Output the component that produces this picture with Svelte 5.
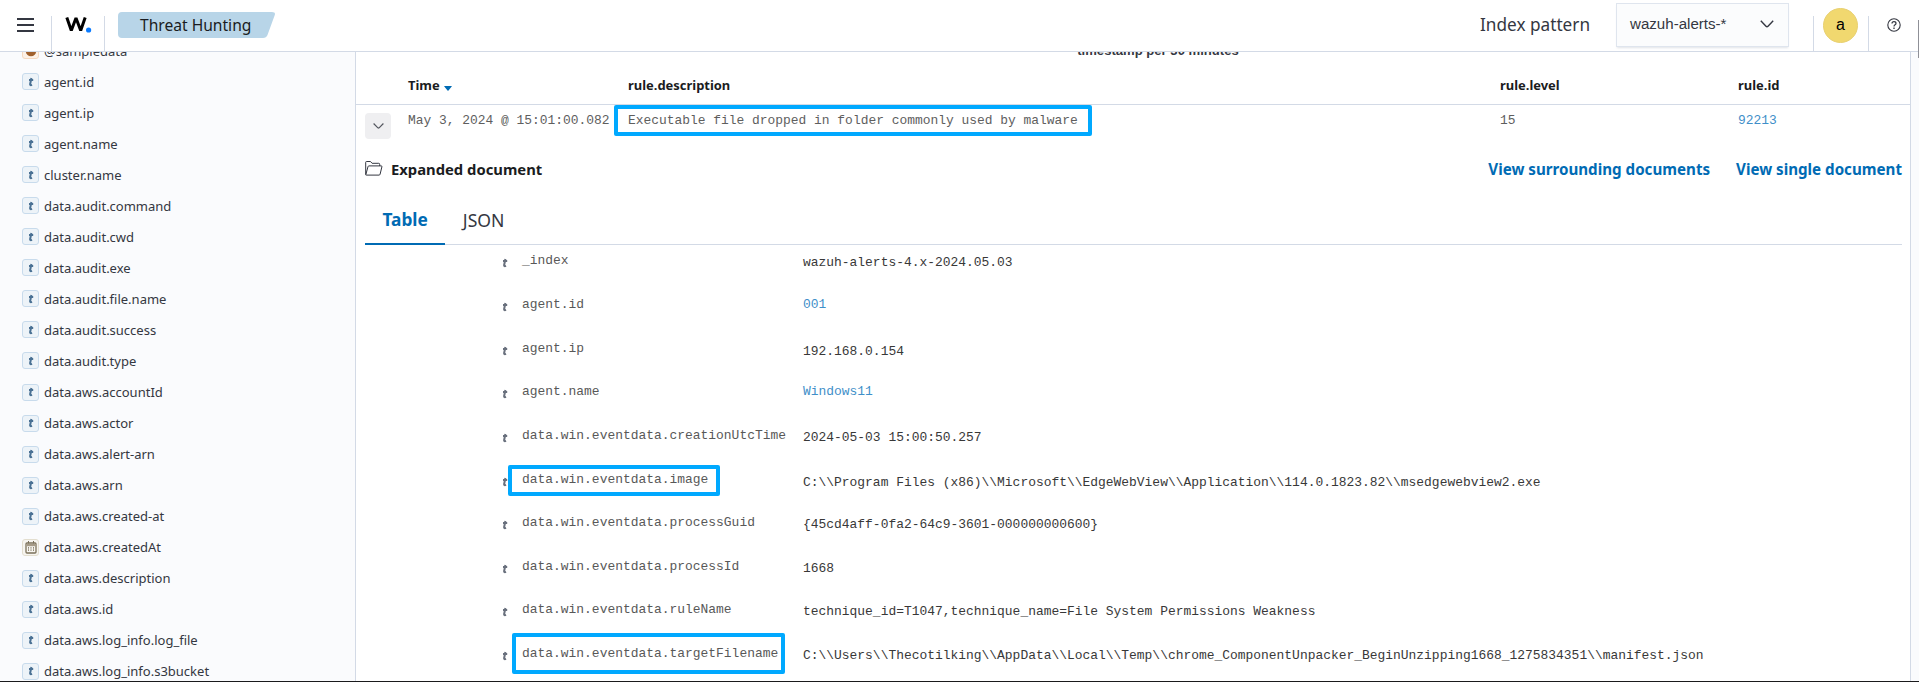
<script>
  const fields = [
    'agent.id', 'agent.ip', 'agent.name', 'cluster.name', 'data.audit.command',
    'data.audit.cwd', 'data.audit.exe', 'data.audit.file.name', 'data.audit.success',
    'data.audit.type', 'data.aws.accountId', 'data.aws.actor', 'data.aws.alert-arn',
    'data.aws.arn', 'data.aws.created-at', 'data.aws.createdAt', 'data.aws.description',
    'data.aws.id', 'data.aws.log_info.log_file', 'data.aws.log_info.s3bucket'
  ];
  const rows = [
    { k: '_index', v: 'wazuh-alerts-4.x-2024.05.03', drop: 2 },
    { k: 'agent.id', v: '001', link: true, drop: 0 },
    { k: 'agent.ip', v: '192.168.0.154', drop: 3 },
    { k: 'agent.name', v: 'Windows11', link: true, drop: 0 },
    { k: 'data.win.eventdata.creationUtcTime', v: '2024-05-03 15:00:50.257', drop: 2 },
    { k: 'data.win.eventdata.image', v: 'C:\\\\Program Files (x86)\\\\Microsoft\\\\EdgeWebView\\\\Application\\\\114.0.1823.82\\\\msedgewebview2.exe', drop: 3, mark: 'image' },
    { k: 'data.win.eventdata.processGuid', v: '{45cd4aff-0fa2-64c9-3601-000000000600}', drop: 2 },
    { k: 'data.win.eventdata.processId', v: '1668', drop: 2 },
    { k: 'data.win.eventdata.ruleName', v: 'technique_id=T1047,technique_name=File System Permissions Weakness', drop: 2 },
    { k: 'data.win.eventdata.targetFilename', v: 'C:\\\\Users\\\\Thecotilking\\\\AppData\\\\Local\\\\Temp\\\\chrome_ComponentUnpacker_BeginUnzipping1668_1275834351\\\\manifest.json', drop: 2, mark: 'target' }
  ];
</script>

<div class="app">
  <header>
    <button class="menu" aria-label="Menu">
      <svg width="17" height="14" viewBox="0 0 17 14"><path d="M0 1h17M0 7h17M0 13h17" stroke="#343741" stroke-width="2" /></svg>
    </button>
    <i class="sep s1"></i>
    <svg class="logo" width="28" height="18" viewBox="0 0 28 18">
      <path d="M1.8 1.5 6.3 14.5 11 2 15.7 14.5 20.2 1.5" fill="none" stroke="#000" stroke-width="3" stroke-linejoin="bevel" />
      <circle cx="23.6" cy="14" r="2.6" fill="#0b7bff" />
    </svg>
    <i class="sep s2"></i>
    <div class="crumb">
      <svg width="158" height="26" viewBox="0 0 158 26"><path d="M4 0h150q4 0 2.6 3.6L149.5 23q-1.2 3-4.5 3H4q-4 0-4-4V4q0-4 4-4z" fill="#b8d5e8" /></svg>
      <span>Threat Hunting</span>
    </div>
    <span class="pattern">Index pattern</span>
    <div class="select">
      <span>wazuh-alerts-*</span>
      <svg width="14" height="8" viewBox="0 0 14 8"><path d="M.8.8 6 6.2Q7 7.2 8 6.2L13.2.8" fill="none" stroke="#343741" stroke-width="1.4" /></svg>
    </div>
    <i class="sep s3"></i>
    <span class="avatar">a</span>
    <i class="sep s4"></i>
    <svg class="help" width="14" height="14" viewBox="0 0 14 14" fill="none" stroke="#343741">
      <circle cx="7" cy="7" r="6.2" stroke-width="1.1" />
      <path d="M5 5.6Q5 3.7 7 3.7T9 5.5C9 6.8 7 6.8 7 8.4" stroke-width="1.2" /><path d="M7 9.6v1.3" stroke-width="1.3" />
    </svg>
    <i class="thumb"></i>
  </header>
  <div class="body">
    <aside>
      <div class="field">
        <span class="token sample"><svg width="12" height="12" viewBox="0 0 12 12"><circle cx="6" cy="6" r="5.2" fill="#a0602c" /><path d="M6 6V0h3z" fill="#fdf1e6" /></svg></span>
        <span>@sampledata</span>
      </div>
      {#each fields as f}
        <div class="field">
          {#if f === 'data.aws.createdAt'}
            <span class="token date"><svg width="12" height="13" viewBox="0 0 12 13"><rect x="1" y="2" width="10" height="10" rx="1" fill="#f7f5f0" stroke="#7b705a" stroke-width="1.3" /><path d="M1.5 4h9" stroke="#a69b87" stroke-width="2.4" /><path d="M3.5 0v2.4M8.5 0v2.4" stroke="#7b705a" /><path d="M3.5 6.2v4M6 6.2v4M8.5 6.2v4" stroke="#7b705a" stroke-dasharray="1.4 .8" /></svg></span>
          {:else}
            <span class="token"><svg width="6" height="10" viewBox="0 0 6 10"><path d="M3.4 1 2.1 7.2Q1.9 8.6 4.1 7.9M1 3h4.2" fill="none" stroke="#4a7194" stroke-width="2" /></svg></span>
          {/if}
          <span>{f}</span>
        </div>
      {/each}
    </aside>
    <main>
      <div class="axis">timestamp per 30 minutes</div>
      <div class="grid head">
        <span></span>
        <span>Time <svg width="8" height="5" viewBox="0 0 8 5"><path d="M.6 0h6.8q.8 0 .3.6L4.5 4.6q-.5.5-1 0L.3.6Q-.2 0 .6 0z" fill="#006bb4" /></svg></span>
        <span>rule.description</span><span>rule.level</span><span>rule.id</span>
      </div>
      <div class="grid hit">
        <button class="toggle" aria-label="Collapse"><svg width="11" height="6" viewBox="0 0 11 6"><path d="M.6.5 4.9 4.8q.6.5 1.2 0L10.4.5" fill="none" stroke="#53565e" stroke-width="1.2" /></svg></button>
        <span>May 3, 2024 @ 15:01:00.082</span>
        <span class="marked">Executable file dropped in folder commonly used by malware<i class="box rule"></i></span>
        <span>15</span><span class="link">92213</span>
      </div>
      <section>
        <div class="title">
          <svg width="18" height="15" viewBox="0 0 18 15" fill="none" stroke="#343741" stroke-width="1"><path d="M.7 13.5V1.3q0-.8.8-.8h4l1.6 1.8h6.6q1 0 1 1V5M.8 13.7 3 5.6q.2-.7 1-.7h12.2q1 0 .7.9l-1.8 7.4q-.2.9-1.1.9H1.3q-.8 0-.5-.4z" /></svg>
          <strong>Expanded document</strong>
          <a href="#surrounding">View surrounding documents</a>
          <a href="#single">View single document</a>
        </div>
        <nav><span class="tab active">Table</span><span class="tab">JSON</span></nav>
        <div class="doc">
          {#each rows as r}
            <div class="row">
              <svg class="type" width="6" height="10" viewBox="0 0 6 10"><path d="M3.4 1 2.1 7.2Q1.9 8.6 4.1 7.9M1 3h4.2" fill="none" stroke="#69707d" stroke-width="2" /></svg>
              <span class="key">{r.k}{#if r.mark}<i class="box {r.mark}"></i>{/if}</span>
              <span class="value" class:link={r.link} style="padding-top: {r.drop}px">{r.v}</span>
            </div>
          {/each}
        </div>
      </section>
    </main>
    <div class="gutter"></div>
  </div>
</div>

<style>
  :global(body) { margin: 0; }
  * { box-sizing: border-box; }
  .app { height: 682px; display: flex; flex-direction: column; overflow: hidden; font-family: "Noto Sans", sans-serif; color: #343741; background: #fff; border-bottom: 1px solid #1a1a1c; }
  .app svg { display: block; flex: none; }
  button { border: 0; padding: 0; background: none; }
  header { height: 52px; flex: none; display: flex; align-items: flex-start; border-bottom: 1px solid #d3dae6; background: #fff; position: relative; }
  .menu { margin: 18px 0 0 17px; }
  .sep { width: 1px; height: 35px; margin-top: 16px; background: #d3dae6; flex: none; }
  .s1 { margin-left: 17px; }
  .logo { margin: 16px 0 0 13px; }
  .s2 { margin-left: 11px; }
  .crumb { margin: 12px 0 0 13px; display: grid; width: 158px; height: 26px; font-size: 15.6px; line-height: 26px; color: #1a1c21; }
  .crumb > * { grid-area: 1 / 1; }
  .crumb span { padding-left: 22px; white-space: nowrap; }
  .pattern { margin: 13px 26px 0 auto; font-size: 17.2px; line-height: 24px; }
  .select { width: 173px; height: 44px; margin-top: 3px; padding: 0 14px 2px 13px; display: flex; align-items: center; justify-content: space-between; border: 1px solid #dfe5ee; background: #fbfcfd; box-shadow: 0 2px 2px -1px #98a2b34d; font: 15.1px/20px "Liberation Sans", sans-serif; }
  .s3 { margin-left: 24px; }
  .avatar { width: 35px; height: 35px; margin: 8px 0 0 9px; border-radius: 50%; background: #f1d86f; border: 1px solid #e8d070; font: 16px/31px "Liberation Sans", sans-serif; text-align: center; color: #000; }
  .s4 { margin-left: 10px; }
  .help { margin: 18px 18px 0 18px; }
  .thumb { position: absolute; right: 0; top: 20px; width: 1px; height: 38px; background: #8f9097; z-index: 3; }
  .body { flex: 1; min-height: 0; display: flex; overflow: hidden; }
  aside { width: 356px; flex: none; overflow: hidden; background: #fafbfd; border-right: 1px solid #d3dae6; font-size: 13px; }
  .field { height: 31.05px; padding-left: 22px; display: flex; align-items: center; gap: 5px; line-height: 20px; }
  .field:first-child { margin-top: -17px; }
  .token { width: 17px; height: 17px; border: 1px solid #c8dbec; border-radius: 3px; background: #edf3f8; display: flex; align-items: center; justify-content: center; }
  .date { border-color: #e3decf; background: #f7f5f0; }
  .sample { border-color: #f5d9c0; background: #fdf1e6; }
  main { flex: 1; min-width: 0; display: flex; flex-direction: column; overflow: hidden; }
  .axis { height: 12px; margin-top: -6px; font: bold 13.1px/10px "Liberation Sans", sans-serif; text-align: center; padding-left: 50px; flex: none; }
  .grid { display: grid; grid-template-columns: 52px 220px 872px 238px 1fr; flex: none; }
  .head { height: 47px; padding-top: 17px; border-bottom: 1px solid #d3dae6; font: bold 12.95px/20px "Noto Sans", sans-serif; color: #1a1c21; }
  .head svg { display: inline-block; vertical-align: -1px; margin-left: 1px; }
  .hit { height: 42px; font: 12.93px/20px "Liberation Mono", monospace; color: #5e5e5e; padding-top: 6px; }
  .toggle { width: 26px; height: 26px; margin: 2px 0 0 9px; border-radius: 4px; background: #efeff1; display: flex; align-items: center; justify-content: center; }
  .link { color: #3f8fc9; }
  .marked, .key { position: relative; }
  .box { position: absolute; border: 4px solid #00a9ff; border-radius: 2px; z-index: 2; }
  .rule { left: -14px; top: -6px; width: 478px; height: 31px; }
  .image { left: -14px; top: -5px; width: 212px; height: 31px; }
  .target { left: -10px; top: -11px; width: 273px; height: 41px; }
  section { margin: 0 8px 0 9px; }
  .title { height: 51px; display: flex; align-items: center; font-size: 15.15px; line-height: 24px; padding-bottom: 8px; color: #1a1c21; }
  .title strong { margin-left: 8px; margin-right: auto; font-size: 14.8px; }
  .title a { margin-left: 26px; color: #006bb4; font-weight: bold; text-decoration: none; }
  nav { height: 47px; display: flex; border-bottom: 1px solid #d3dae6; font-size: 17.6px; }
  .tab { height: 47px; padding: 7px 17px 0 18px; line-height: 30px; }
  .active { color: #006bb4; font-weight: bold; border-bottom: 2px solid #006bb4; font-size: 17.3px; padding-left: 17.5px; }
  .doc { padding-top: 6.3px; font: 12.94px/20px "Liberation Mono", monospace; }
  .row { height: 43.65px; display: grid; grid-template-columns: 137px 20px 281px 1fr; }
  .type { grid-column: 2; margin-top: 7px; }
  .key { color: #585858; height: 20px; }
  .value { color: #383838; white-space: nowrap; }
  .value.link { color: #3f8fc9; }
  .gutter { width: 9px; flex: none; border-left: 1px solid #d3dae6; background: #fafbfd; }
</style>
